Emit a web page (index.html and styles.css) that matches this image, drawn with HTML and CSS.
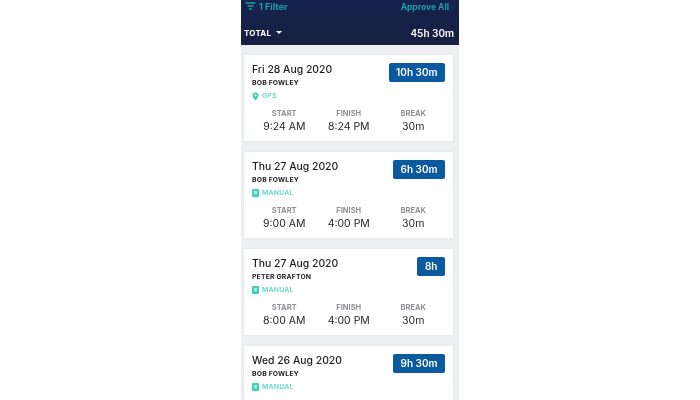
FILE: index.html
```html
<!DOCTYPE html>
<html>
    <head>
        <meta charset="utf-8">
        <title>Timesheets</title>
        <link rel="stylesheet" href="styles.css">
    </head>
    <body>
        <div class="phone">
            <div class="header">
                <div class="header-row top">
                    <div class="filter">
                        <svg class="filter-icon" width="11" height="9" viewBox="0 0 11 9"><path d="M0.5 1H10.5M2.5 4H8.5M4 7H7" stroke="#1f9fa8" stroke-width="1.3" fill="none"/></svg>
                        1 Filter
                    </div>
                    <div class="approve">Approve All</div>
                </div>
                <div class="header-row bottom">
                    <div class="total">TOTAL <span class="caret"></span></div>
                    <div class="total-hours">45h 30m</div>
                </div>
            </div>

            <div class="list">
                <div class="card">
                    <div class="card-top">
                        <div>
                            <div class="date">Fri 28 Aug 2020</div>
                            <div class="name">BOB FOWLEY</div>
                            <div class="source">
                                <svg width="7" height="9" viewBox="0 0 8 10"><path fill-rule="evenodd" d="M4 0.3C2 0.3 0.6 1.8 0.6 3.7C0.6 6 4 9.7 4 9.7S7.4 6 7.4 3.7C7.4 1.8 6 0.3 4 0.3ZM4 2.5A1.2 1.2 0 1 1 4 4.9A1.2 1.2 0 1 1 4 2.5Z" fill="#3fd0b4"/></svg>
                                GPS
                            </div>
                        </div>
                        <div class="hours">10h 30m</div>
                    </div>
                    <div class="times">
                        <div class="time"><div class="label">START</div><div class="value">9:24 AM</div></div>
                        <div class="time"><div class="label">FINISH</div><div class="value">8:24 PM</div></div>
                        <div class="time"><div class="label">BREAK</div><div class="value">30m</div></div>
                    </div>
                </div>

                <div class="card">
                    <div class="card-top">
                        <div>
                            <div class="date">Thu 27 Aug 2020</div>
                            <div class="name">BOB FOWLEY</div>
                            <div class="source">
                                <svg width="7" height="8" viewBox="0 0 7 8"><rect width="7" height="8" rx="1" fill="#3fd0b4"/><rect x="2" y="2" width="3" height="3.5" fill="#a5eadc"/></svg>
                                MANUAL
                            </div>
                        </div>
                        <div class="hours">6h 30m</div>
                    </div>
                    <div class="times">
                        <div class="time"><div class="label">START</div><div class="value">9:00 AM</div></div>
                        <div class="time"><div class="label">FINISH</div><div class="value">4:00 PM</div></div>
                        <div class="time"><div class="label">BREAK</div><div class="value">30m</div></div>
                    </div>
                </div>

                <div class="card">
                    <div class="card-top">
                        <div>
                            <div class="date">Thu 27 Aug 2020</div>
                            <div class="name">PETER GRAFTON</div>
                            <div class="source">
                                <svg width="7" height="8" viewBox="0 0 7 8"><rect width="7" height="8" rx="1" fill="#3fd0b4"/><rect x="2" y="2" width="3" height="3.5" fill="#a5eadc"/></svg>
                                MANUAL
                            </div>
                        </div>
                        <div class="hours">8h</div>
                    </div>
                    <div class="times">
                        <div class="time"><div class="label">START</div><div class="value">8:00 AM</div></div>
                        <div class="time"><div class="label">FINISH</div><div class="value">4:00 PM</div></div>
                        <div class="time"><div class="label">BREAK</div><div class="value">30m</div></div>
                    </div>
                </div>

                <div class="card">
                    <div class="card-top">
                        <div>
                            <div class="date">Wed 26 Aug 2020</div>
                            <div class="name">BOB FOWLEY</div>
                            <div class="source">
                                <svg width="7" height="8" viewBox="0 0 7 8"><rect width="7" height="8" rx="1" fill="#3fd0b4"/><rect x="2" y="2" width="3" height="3.5" fill="#a5eadc"/></svg>
                                MANUAL
                            </div>
                        </div>
                        <div class="hours">9h 30m</div>
                    </div>
                </div>
            </div>
        </div>
    </body>
</html>
```

FILE: styles.css
```css
html, body {
    height: 100%;
}

body {
    margin: 0;
    background: white;
    font-family: Inter, "Liberation Sans", sans-serif;
    overflow: hidden;
}

.phone {
    width: 218px;
    height: 400px;
    margin: 0 auto;
    background: #eeeff2;
    overflow: hidden;
    filter: blur(0.35px);
}

.header {
    height: 45px;
    box-sizing: border-box;
    padding: 0 5px 0 3px;
    background: linear-gradient(#16234e, #161f41);
}

.header-row {
    display: flex;
    justify-content: space-between;
    align-items: center;
}

.header-row.top {
    height: 13px;
    padding-right: 5px;
    font-size: 9px;
    font-weight: 700;
    color: #1f9fa8;
}

.header-row.bottom {
    height: 16px;
    margin-top: 12px;
    color: white;
}

.filter {
    display: flex;
    align-items: center;
    gap: 3px;
    padding-left: 1px;
}

.approve {
    font-size: 8.5px;
}

.total {
    font-size: 8px;
    font-weight: 700;
    letter-spacing: 0.2px;
}

.caret {
    display: inline-block;
    width: 0;
    height: 0;
    margin-left: 3px;
    border-left: 3px solid transparent;
    border-right: 3px solid transparent;
    border-top: 3px solid white;
    vertical-align: 2px;
}

.total-hours {
    font-size: 10px;
    font-weight: 600;
}

.list {
    padding: 10px 6px 0 3px;
}

.card {
    height: 86px;
    box-sizing: border-box;
    margin-bottom: 11px;
    padding: 8px 8px 0 8px;
    background: white;
    box-shadow: 0 0 2px #d9dbe0;
}

.card-top {
    display: flex;
    justify-content: space-between;
    align-items: flex-start;
}

.date {
    font-size: 10.4px;
    line-height: 14px;
    font-weight: 500;
    color: #1c1c22;
}

.name {
    margin-top: 2px;
    font-size: 6.8px;
    line-height: 8px;
    font-weight: 700;
    letter-spacing: 0.2px;
    color: #1c1c22;
}

.source {
    display: flex;
    align-items: center;
    gap: 3px;
    margin-top: 4px;
    font-size: 6.8px;
    line-height: 10px;
    font-weight: 700;
    letter-spacing: 0.2px;
    color: #6fdcc6;
}

.hours {
    height: 19px;
    padding: 0 7.5px;
    border-radius: 2px;
    background: #0b5a9f;
    color: white;
    font-size: 10px;
    font-weight: 600;
    line-height: 19px;
}

.times {
    display: grid;
    grid-template-columns: 64.5px 64.5px 64.5px;
    margin-top: 8px;
    text-align: center;
}

.label {
    font-size: 7.5px;
    line-height: 9px;
    font-weight: 700;
    color: #8f9196;
}

.value {
    margin-top: 2px;
    font-size: 10.5px;
    line-height: 14px;
    color: #26262b;
}
```
